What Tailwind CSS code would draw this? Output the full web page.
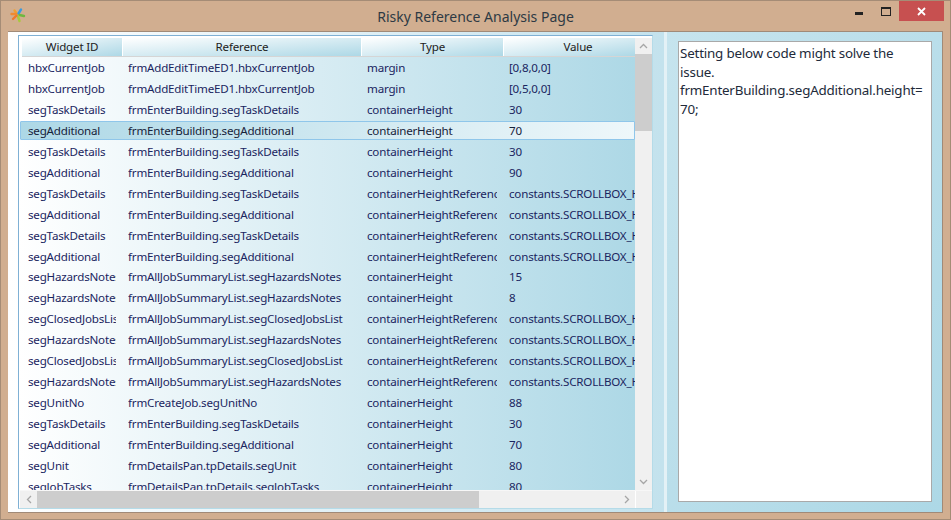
<!DOCTYPE html>
<html lang="en">
<head>
  <meta charset="UTF-8">
  <title>Risky Reference Analysis Page</title>
  <script src="https://cdn.jsdelivr.net/npm/@tailwindcss/browser@4"></script>
</head>
<body class="w-[951px] h-[520px] overflow-hidden font-['Noto_Sans','Open_Sans',sans-serif] text-[11.6px] tracking-[-0.2px] text-[#1a2560]">
  <div class="w-full h-full flex flex-col bg-[#d1ae90] border border-[#a58c76]">
    <!-- Title bar -->
    <div class="relative h-[30px] shrink-0 flex items-center justify-center">
      <svg class="absolute left-[9px] top-[6px] w-4 h-4" viewBox="0 0 16 16" fill="none" stroke-width="2.4" stroke-linecap="round">
        <path d="M7 7 L4.5 3.5" stroke="#f0a030"/>
        <path d="M8.5 6.5 L11 2.5" stroke="#3a9be0"/>
        <path d="M9.5 8 L14 9" stroke="#6fb83f"/>
        <path d="M8 9.5 L9.5 14" stroke="#a9c83c"/>
        <path d="M6.5 8.5 L3 12" stroke="#ef7a2a"/>
        <path d="M6 7 L1.5 7" stroke="#f08a30"/>
      </svg>
      <span class="text-[14px] tracking-normal text-[#2e3a44]">Risky Reference Analysis Page</span>
      <div class="absolute right-[6px] top-0 flex items-start">
        <div class="w-[8px] h-[20px] mr-[18px] flex items-end pb-[6px]"><div class="w-[8px] h-[3px] bg-[#222]"></div></div>
        <div class="w-[10px] h-[20px] mr-[8px] flex items-start pt-[6px]"><div class="w-[10px] h-[9px] border border-t-2 border-[#222]"></div></div>
        <div class="w-[45px] h-[20px] bg-[#c75050] flex items-center justify-center">
          <svg class="w-[9px] h-[9px]" viewBox="0 0 9 9" stroke="#fff" stroke-width="1.8"><path d="M1 1 L8 8 M8 1 L1 8"/></svg>
        </div>
      </div>
    </div>

    <!-- Client area -->
    <div class="flex h-[482px] mx-[7px] border-t border-b border-r border-[#a08a78] shrink-0">
      <!-- Left panel -->
      <div class="w-[656px] shrink-0 pl-[10px] pt-[3px] pb-[3px] pr-[11px] bg-gradient-to-r from-white to-[#c3e2ed]">
        <div class="h-full flex flex-col border border-[#7fb0d4] border-r-[#b5dbe8] border-b-[#b5dbe8] pl-[3px] pt-[2px] bg-white">
          <div class="flex flex-1 min-h-0">
            <div class="w-[613px] flex flex-col min-h-0">
              <!-- Header -->
              <div class="h-[18px] flex shrink-0 text-[#222] text-center leading-[18px]">
                <div class="w-[100px] bg-gradient-to-br from-white to-[#add8e6]">Widget ID</div>
                <div class="w-[238px] ml-[1px] bg-gradient-to-br from-white to-[#add8e6]">Reference</div>
                <div class="w-[141px] ml-[1px] bg-gradient-to-br from-white to-[#add8e6]">Type</div>
                <div class="w-[131px] ml-[1px] pl-[17px] bg-gradient-to-br from-white to-[#add8e6]">Value</div>
              </div>
              <div class="h-[1px] bg-[#d5d5d5] shrink-0"></div>
              <!-- Rows -->
              <div id="rows" class="flex-1 min-h-0 overflow-hidden pt-[0.35px] bg-gradient-to-r from-white to-[#add8e6] -ml-[3px] pl-[3px]"></div>
            </div>
            <!-- Vertical scrollbar -->
            <div class="w-[17px] shrink-0 bg-[#f0f0f0] flex flex-col">
              <div class="h-[16px] flex items-center justify-center">
                <svg class="w-[9px] h-[6px]" viewBox="0 0 9 6" fill="none" stroke="#a6a6a6" stroke-width="1.3"><path d="M1 5 L4.5 1.5 L8 5"/></svg>
              </div>
              <div class="h-[77px] bg-[#cdcdcd]"></div>
              <div class="flex-1"></div>
              <div class="h-[17px] flex items-center justify-center">
                <svg class="w-[9px] h-[6px]" viewBox="0 0 9 6" fill="none" stroke="#a6a6a6" stroke-width="1.3"><path d="M1 1 L4.5 4.5 L8 1"/></svg>
              </div>
            </div>
          </div>
          <!-- Horizontal scrollbar -->
          <div class="h-[18px] shrink-0 flex -ml-[2px] bg-[#f0f0f0] border-t border-[#f7f7f7]">
            <div class="w-[17px] flex items-center justify-center">
              <svg class="w-[6px] h-[9px]" viewBox="0 0 6 9" fill="none" stroke="#a6a6a6" stroke-width="1.3"><path d="M5 1 L1.5 4.5 L5 8"/></svg>
            </div>
            <div class="w-[442px] bg-[#cdcdcd]"></div>
            <div class="flex-1"></div>
            <div class="w-[17px] flex items-center justify-center">
              <svg class="w-[6px] h-[9px]" viewBox="0 0 6 9" fill="none" stroke="#a6a6a6" stroke-width="1.3"><path d="M1 1 L4.5 4.5 L1 8"/></svg>
            </div>
            <div class="w-[17px] border-l border-white"></div>
          </div>
        </div>
      </div>

      <!-- Splitter -->
      <div class="w-[3px] shrink-0 bg-[#e3f1f6]"></div>

      <!-- Right panel -->
      <div class="flex-1 pl-[11px] pr-[10px] pt-[9px] pb-[10px] bg-gradient-to-br from-[#c6e4ee] to-[#add8e6]">
        <div class="h-full bg-white border border-[#a9a9a9] pl-[1px] pt-[2px] text-[13.4px] tracking-[-0.2px] leading-[18.7px] text-[#222a3a]">
          Setting below code might solve the<br>issue.<br>frmEnterBuilding.segAdditional.height=<br>70;
        </div>
      </div>
    </div>
  </div>

  <script>
    const data = [
      ['hbxCurrentJob', 'frmAddEditTimeED1.hbxCurrentJob', 'margin', '[0,8,0,0]'],
      ['hbxCurrentJob', 'frmAddEditTimeED1.hbxCurrentJob', 'margin', '[0,5,0,0]'],
      ['segTaskDetails', 'frmEnterBuilding.segTaskDetails', 'containerHeight', '30'],
      ['segAdditional', 'frmEnterBuilding.segAdditional', 'containerHeight', '70'],
      ['segTaskDetails', 'frmEnterBuilding.segTaskDetails', 'containerHeight', '30'],
      ['segAdditional', 'frmEnterBuilding.segAdditional', 'containerHeight', '90'],
      ['segTaskDetails', 'frmEnterBuilding.segTaskDetails', 'containerHeightReference', 'constants.SCROLLBOX_HEIGHT'],
      ['segAdditional', 'frmEnterBuilding.segAdditional', 'containerHeightReference', 'constants.SCROLLBOX_HEIGHT'],
      ['segTaskDetails', 'frmEnterBuilding.segTaskDetails', 'containerHeightReference', 'constants.SCROLLBOX_HEIGHT'],
      ['segAdditional', 'frmEnterBuilding.segAdditional', 'containerHeightReference', 'constants.SCROLLBOX_HEIGHT'],
      ['segHazardsNotes', 'frmAllJobSummaryList.segHazardsNotes', 'containerHeight', '15'],
      ['segHazardsNotes', 'frmAllJobSummaryList.segHazardsNotes', 'containerHeight', '8'],
      ['segClosedJobsList', 'frmAllJobSummaryList.segClosedJobsList', 'containerHeightReference', 'constants.SCROLLBOX_HEIGHT'],
      ['segHazardsNotes', 'frmAllJobSummaryList.segHazardsNotes', 'containerHeightReference', 'constants.SCROLLBOX_HEIGHT'],
      ['segClosedJobsList', 'frmAllJobSummaryList.segClosedJobsList', 'containerHeightReference', 'constants.SCROLLBOX_HEIGHT'],
      ['segHazardsNotes', 'frmAllJobSummaryList.segHazardsNotes', 'containerHeightReference', 'constants.SCROLLBOX_HEIGHT'],
      ['segUnitNo', 'frmCreateJob.segUnitNo', 'containerHeight', '88'],
      ['segTaskDetails', 'frmEnterBuilding.segTaskDetails', 'containerHeight', '30'],
      ['segAdditional', 'frmEnterBuilding.segAdditional', 'containerHeight', '70'],
      ['segUnit', 'frmDetailsPan.tpDetails.segUnit', 'containerHeight', '80'],
      ['segJobTasks', 'frmDetailsPan.tpDetails.segJobTasks', 'containerHeight', '80'],
    ];
    const rowClass = 'h-[20.95px] flex items-center whitespace-nowrap';
    const selectedClass = 'h-[18.95px] my-[1px] flex items-center whitespace-nowrap -ml-[2px] pl-[1px] border border-[#8fc6ea] rounded-[1px] bg-gradient-to-r from-[#add8e6] to-[#eef7fa] text-[#16223a]';
    document.getElementById('rows').innerHTML = data.map((r, i) => `
      <div class="${i === 3 ? selectedClass : rowClass}">
        <div class="w-[88px] ml-[6px] mr-[6px] shrink-0 overflow-hidden">${r[0]}</div>
        <div class="w-[227px] ml-[6px] mr-[6px] shrink-0 overflow-hidden">${r[1]}</div>
        <div class="w-[130px] ml-[6px] mr-[6px] shrink-0 overflow-hidden">${r[2]}</div>
        <div class="w-[126px] ml-[6px] shrink-0 overflow-hidden">${r[3]}</div>
      </div>`).join('');
  </script>
</body>
</html>
